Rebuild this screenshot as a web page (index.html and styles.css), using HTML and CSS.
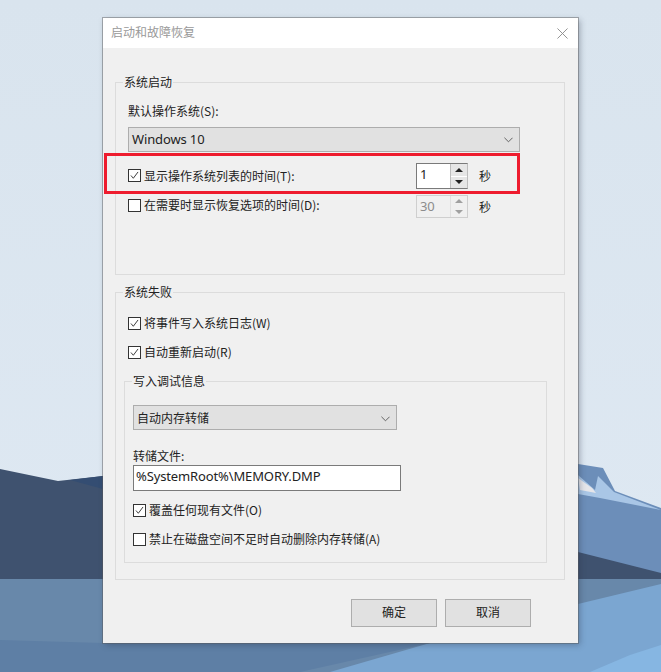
FILE: index.html
```html
<!DOCTYPE html>
<html lang="zh-CN">
<head>
<meta charset="utf-8">
<title>启动和故障恢复</title>
<link rel="stylesheet" href="styles.css">
</head>
<body>
<svg class="wallpaper" viewBox="0 0 661 672" aria-hidden="true">
  <defs>
    <linearGradient id="sky" x1="0" y1="0" x2="0" y2="1">
      <stop offset="0" stop-color="#d9e4ee"/>
      <stop offset="1" stop-color="#dfe9f3"/>
    </linearGradient>
  </defs>
  <rect width="661" height="672" fill="url(#sky)"/>
  <polygon points="0,469 58,481 103,476 103,580 0,580" fill="#3f526f"/>
  <polygon points="70,480 103,476 103,489" fill="#344d72"/>
  <polygon points="578,464 603,468 615,491 661,508 661,580 578,580" fill="#6c8eb9"/>
  <polygon points="578,475 595,490 598,476 614,492 661,510 600,498 578,494" fill="#a9c6e6"/>
  <polygon points="578,478 592,488 596,493 580,490" fill="#e6e6ea"/>
  <polygon points="578,552 661,573 661,580 578,580" fill="#3f526f"/>
  <rect y="579" width="661" height="93" fill="#6888aa"/>
  <polygon points="578,604 661,584 661,672 330,672 430,643 578,643" fill="#7ba6d1"/>
  <polygon points="0,640 0,672 300,672 430,643 103,643" fill="#5e7fa5"/>
  <polygon points="590,672 630,655 661,645 661,672" fill="#86b6e2"/>
</svg>
<main class="dialog">
  <header class="titlebar">
    <span class="title">启动和故障恢复</span>
    <svg class="close" viewBox="0 0 12 12" aria-label="关闭"><path d="M.5.5l11 11M11.5.5l-11 11"/></svg>
  </header>
  <div class="content">
    <section class="group boot">
      <h2 class="legend">系统启动</h2>
      <div class="field-label">默认操作系统(S):</div>
      <div class="select wide">
        <span class="latin">Windows 10</span>
        <svg class="chev" viewBox="0 0 10 6"><path d="M.5.5L5 5 9.5.5"/></svg>
      </div>
      <div class="spin-row first">
        <div class="check on"><svg viewBox="0 0 14 14"><path d="M2.5 7l3 3.5 6-8"/></svg></div>
        <span class="check-text">显示操作系统列表的时间(T):</span>
        <div class="spin">
          <span class="spin-value latin">1</span>
          <div class="spin-btns">
            <span class="arrow up"></span>
            <span class="arrow down"></span>
          </div>
        </div>
        <span class="unit">秒</span>
      </div>
      <div class="spin-row second">
        <div class="check"></div>
        <span class="check-text">在需要时显示恢复选项的时间(D):</span>
        <div class="spin disabled">
          <span class="spin-value latin">30</span>
          <div class="spin-btns">
            <span class="arrow up"></span>
            <span class="arrow down"></span>
          </div>
        </div>
        <span class="unit">秒</span>
      </div>
      <div class="highlight"></div>
    </section>
    <section class="group failure">
      <h2 class="legend">系统失败</h2>
      <div class="check-row">
        <div class="check on"><svg viewBox="0 0 14 14"><path d="M2.5 7l3 3.5 6-8"/></svg></div>
        <span class="check-text">将事件写入系统日志(W)</span>
      </div>
      <div class="check-row">
        <div class="check on"><svg viewBox="0 0 14 14"><path d="M2.5 7l3 3.5 6-8"/></svg></div>
        <span class="check-text">自动重新启动(R)</span>
      </div>
      <section class="group debug">
        <h2 class="legend">写入调试信息</h2>
        <div class="select narrow">
          <span>自动内存转储</span>
          <svg class="chev" viewBox="0 0 10 6"><path d="M.5.5L5 5 9.5.5"/></svg>
        </div>
        <div class="dump-label">转储文件:</div>
        <div class="textbox latin">%SystemRoot%\MEMORY.DMP</div>
        <div class="check-row after-box">
          <div class="check on"><svg viewBox="0 0 14 14"><path d="M2.5 7l3 3.5 6-8"/></svg></div>
          <span class="check-text">覆盖任何现有文件(O)</span>
        </div>
        <div class="check-row">
          <div class="check"></div>
          <span class="check-text">禁止在磁盘空间不足时自动删除内存转储(A)</span>
        </div>
      </section>
    </section>
    <footer class="actions">
      <button class="btn" type="button">确定</button>
      <button class="btn" type="button">取消</button>
    </footer>
  </div>
</main>
</body>
</html>
```
FILE: styles.css
```css
* { box-sizing: border-box; }
html, body { margin: 0; height: 100%; }
body {
  width: 661px;
  height: 672px;
  overflow: hidden;
  position: relative;
  font-family: "Noto Sans CJK SC", "Noto Sans", sans-serif;
  font-size: 12px;
  line-height: 16px;
  color: #222;
  padding: 18px 0 0 103px;
}
.wallpaper { position: absolute; inset: 0; width: 661px; height: 672px; }
.latin { font-family: "Noto Sans", "Noto Sans CJK SC", sans-serif; font-size: 13px; letter-spacing: -.13px; }

.dialog {
  position: relative;
  width: 475px;
  height: 625px;
  background: #f0f0f0;
  box-shadow: 0 0 0 1px rgba(90, 90, 90, .45), 2px 2px 6px rgba(40, 50, 70, .35);
}
.titlebar {
  height: 30px;
  background: #fff;
  display: flex;
  align-items: center;
  justify-content: space-between;
  padding: 0 10px 2px 8px;
}
.title { color: #999; font-size: 12px; }
.close { width: 11px; height: 11px; fill: none; stroke: #8a8a8a; stroke-width: 1; margin-top: 2px; }

.content { padding: 34px 13px 0 12px; }
.group {
  position: relative;
  border: 1px solid #dcdcdc;
}
.legend {
  position: absolute;
  top: -9px;
  left: 7px;
  margin: 0;
  padding: 0 1px;
  font-size: 12px;
  font-weight: 400;
  background: #f0f0f0;
  line-height: 16px;
}
.boot { height: 193px; padding: 20px 0 0 12px; }
.failure { height: 288px; margin-top: 17px; padding: 22px 8px 0 12px; }
.debug { height: 182px; margin: 21px 9px 0 -4px; padding: 23px 0 0 8px; }

.field-label { height: 16px; }
.select {
  display: flex;
  align-items: center;
  justify-content: space-between;
  height: 25px;
  background: #e1e1e1;
  border: 1px solid #adadad;
  padding: 0 5px 2px 3px;
}
.select.wide { width: 392px; margin-top: 8px; }
.select.narrow { width: 264px; padding-bottom: 0; }
.chev { width: 9px; height: 6px; fill: none; stroke: #555; stroke-width: 1; margin: 2px 1px 0 0; }

.spin-row { display: flex; align-items: center; height: 26px; }
.spin-row.first { margin-top: 11px; }
.spin-row.second { height: 23px; margin-top: 6px; }
.spin-row.first .check, .spin-row.first .check-text { margin-bottom: 1px; }
.spin-row.second .check, .spin-row.second .check-text { margin-bottom: 3px; }
.check {
  flex: none;
  width: 13px;
  height: 13px;
  border: 1px solid #333;
  background: #fff;
  display: flex;
}
.check svg { width: 100%; height: 100%; fill: none; stroke: #333; stroke-width: 1.2; }
.check-text { margin-left: 3px; white-space: nowrap; }
.spin {
  flex: none;
  display: flex;
  margin-left: auto;
  width: 52px;
  height: 100%;
  border: 1px solid #7a7a7a;
  border-right-color: #bdbdbd;
  background: #fff;
}
.spin-value { flex: 1; padding-left: 3px; line-height: 21px; }
.spin-btns {
  width: 17px;
  display: flex;
  flex-direction: column;
  gap: 1px;
  background: #fff;
  border-left: 1px solid #bdbdbd;
}
.arrow {
  flex: 1;
  background: #e6e6e6;
  display: flex;
  align-items: center;
  justify-content: center;
}
.arrow::before {
  content: "";
  border-left: 4px solid transparent;
  border-right: 4px solid transparent;
}
.arrow.up::before { border-bottom: 4px solid #222; }
.arrow.down::before { border-top: 4px solid #222; }
.spin.disabled { border-color: #cfcfcf; background: #f0f0f0; color: #8c8c8c; }
.spin.disabled .spin-btns { background: #f0f0f0; border-left-color: #e0e0e0; }
.spin.disabled .arrow { background: #f0f0f0; }
.spin.disabled .arrow.up::before { border-bottom-color: #a0a0a0; }
.spin.disabled .arrow.down::before { border-top-color: #a0a0a0; }
.unit { flex: none; width: 17px; margin: 0 68px 0 11px; }

.highlight {
  position: absolute;
  left: -12px;
  top: 70px;
  width: 416px;
  height: 41px;
  border: 3px solid #ee1c2e;
}

.check-row { display: flex; align-items: center; height: 16px; }
.check-row + .check-row { margin-top: 13px; }
.dump-label { margin-top: 18px; height: 17px; }
.textbox {
  width: 268px;
  height: 26px;
  background: #fff;
  border: 1px solid #7a7a7a;
  padding-left: 2px;
  line-height: 21px;
}
.after-box { margin-top: 11px; }

.actions { display: flex; gap: 8px; justify-content: flex-end; margin: 19px 34px 0 0; }
.btn {
  width: 86px;
  height: 28px;
  padding: 0 0 2px;
  font: inherit;
  color: #222;
  background: #e1e1e1;
  border: 1px solid #adadad;
}
```
